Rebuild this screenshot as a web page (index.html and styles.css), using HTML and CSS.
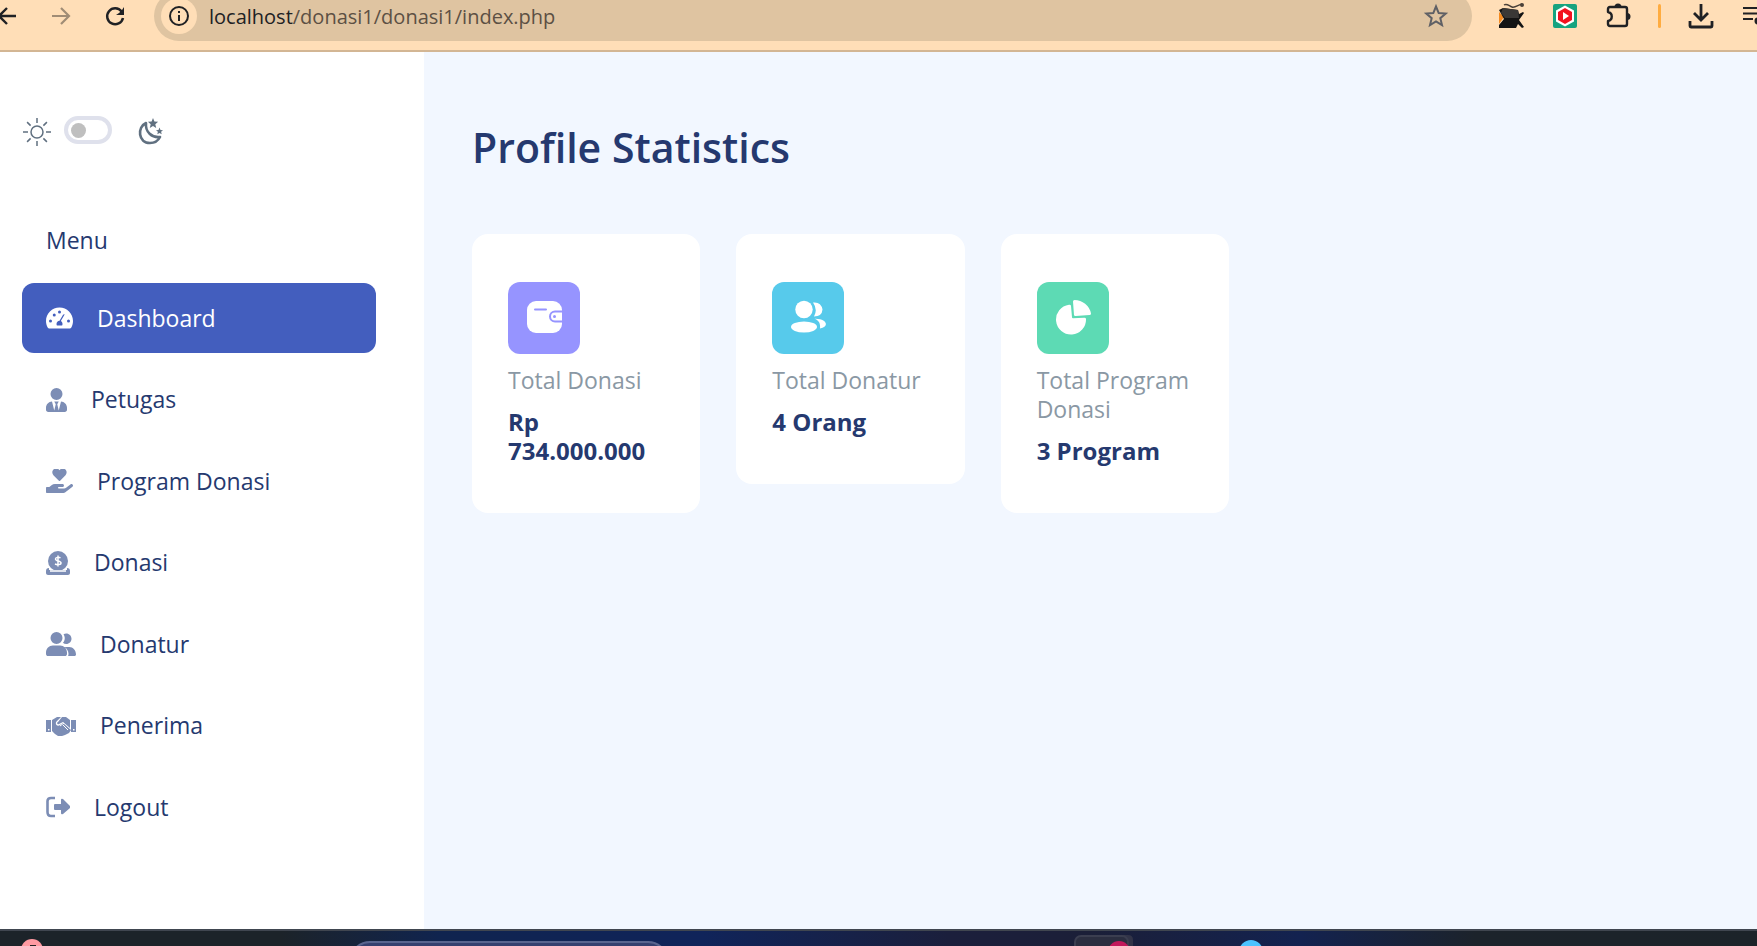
FILE: index.html
```html
<!DOCTYPE html>
<html lang="id">
<head>
<meta charset="utf-8">
<title>Dashboard Donasi</title>
<link rel="stylesheet" href="styles.css">
</head>
<body>
<header class="browser">
  <button class="tool tool-back" aria-label="Back"><svg width="24" height="24" viewBox="0 0 24 24"><path d="M21 12H4M12 4l-8 8 8 8" fill="none" stroke="#202124" stroke-width="2.4"/></svg></button>
  <button class="tool tool-forward" aria-label="Forward"><svg width="24" height="24" viewBox="0 0 24 24"><path d="M3 12h17M12 4l8 8-8 8" fill="none" stroke="#a08c75" stroke-width="2.2"/></svg></button>
  <button class="tool tool-reload" aria-label="Reload"><svg width="24" height="24" viewBox="0 0 24 24"><path d="M18.600 7.500A8 8 0 1 0 20 14" fill="none" stroke="#202124" stroke-width="2.500"/><path d="M21 3v8h-8l3-2 3-3z" fill="#202124"/></svg></button>
  <div class="address">
    <span class="site-info"><svg width="24" height="24" viewBox="0 0 24 24"><circle cx="12" cy="12" r="9" fill="none" stroke="#202124" stroke-width="2"/><path d="M12 11v6M12 7v2" stroke="#202124" stroke-width="2"/></svg></span>
    <p class="url"><span class="url-host">localhost</span>/donasi1/donasi1/index.php</p>
    <button class="tool tool-star" aria-label="Bookmark"><svg width="26" height="26" viewBox="0 0 26 26"><path d="M13 3.500l2.700 6.600 7 .5-5.400 4.600 1.700 6.900-6-3.700-6 3.700 1.700-6.900-5.400-4.600 7-.5z" fill="none" stroke="#5f6065" stroke-width="2"/></svg></button>
  </div>
  <div class="extensions">
    <svg width="26" height="26" viewBox="0 0 26 26"><path d="M1 9l5 5-5 7z" fill="#f58a1f"/><path d="M5 5l15 2 1 4 4-2 1 1-5 7 5 7-2 1-4-4-2 4H1v-3l5-6-5-9z" fill="#141414"/><path d="M5 5l15 2 1 8H7L3 10z" fill="#3a3836"/><path d="M6 2c3-2 5 1 8 2s6-2 10-3" fill="none" stroke="#4a4038" stroke-width="1.500"/><circle cx="24" cy="2" r="2" fill="#4a4038"/></svg>
    <svg width="26" height="26" viewBox="0 0 26 26"><rect x="1" y="1" width="24" height="24" rx="2" fill="#16a37f"/><path d="M13 2.500l9 5v11l-9 5-9-5v-11z" fill="#fff"/><path d="M13 5l7 4v8l-7 4-7-4V9z" fill="#f3101f"/><path d="M11 9l6 4-6 4z" fill="#fff"/></svg>
    <svg width="26" height="26" viewBox="0 0 26 26"><path d="M4 4h15q2 0 2 2v15q0 2-2 2H4q-2 0-2-2v-3c5-1 5-8 0-9V6q0-2 2-2z" fill="none" stroke="#202124" stroke-width="2.400" stroke-linejoin="round"/><path d="M8.500 4a3.500 3.500 0 0 1 7 0zM21 10a3.500 3.500 0 0 1 0 7z" fill="#202124"/></svg>
  </div>
  <span class="divider"></span>
  <button class="tool tool-download" aria-label="Downloads"><svg width="26" height="26" viewBox="0 0 26 26"><path d="M13 1v15M6 10l7 7 7-7M2 18v5q0 1 1 1h20q1 0 1-1v-5" fill="none" stroke="#202124" stroke-width="2.800"/></svg></button>
  <button class="tool tool-media" aria-label="Media"><svg width="26" height="26" viewBox="0 0 26 26"><path d="M1 5h15M1 10.500h15M1 16h10" stroke="#202124" stroke-width="2.200"/><circle cx="16" cy="18" r="3.500" fill="#202124"/><path d="M18.500 18V6h5" stroke="#202124" stroke-width="2.200" fill="none"/></svg></button>
</header>

<div class="app">
  <aside class="sidebar">
    <div class="theme">
      <svg class="muted" width="28" height="28" viewBox="0 0 28 28" fill="none" stroke="currentColor" stroke-width="1.500"><circle cx="14" cy="14" r="6"/><path d="M14 0v5M14 23v5M0 14h5M23 14h5M4.100 4.100l3.500 3.500M20.400 20.400l3.500 3.500M4.100 23.900l3.500-3.500M20.400 7.600l3.500-3.500"/></svg>
      <input class="switch" type="checkbox" role="switch" aria-label="Dark mode">
      <svg class="moon muted" width="26" height="28" viewBox="0 0 26 28"><path d="M8 5C-1 9 0 25 12 25c5 0 8-2 10-6-8 1-15-5-14-14z" fill="none" stroke="currentColor" stroke-width="2.600" stroke-linejoin="round"/><path d="M15 0l1.400 3.500 3.700.3-2.800 2.400.9 3.700-3.200-2-3.200 2 .9-3.700-2.800-2.400 3.700-.3zM21.500 9.500l1 2.500 2.500.2-1.900 1.600.6 2.500-2.200-1.400-2.200 1.400.6-2.500-1.900-1.600 2.500-.2z" fill="currentColor"/></svg>
    </div>
    <h2 class="menu-title">Menu</h2>
    <nav class="menu">
      <a class="item active" href="#"><svg width="27" height="24" viewBox="0 0 576 512"><path fill="currentColor" d="M288 32C129 32 0 161 0 320c0 53 14 102 39 144 6 10 17 16 28 16h442c11 0 22-6 28-16 25-42 39-91 39-144C576 161 447 32 288 32zm0 64a32 32 0 1 1 0 64 32 32 0 0 1 0-64zM96 352a32 32 0 1 1 0-64 32 32 0 0 1 0 64zm48-160a32 32 0 1 1 64 0 32 32 0 0 1-64 0zm247 2l-75 127c22 13 36 36 36 63 0 11-3 22-8 32H232c-5-10-8-21-8-32 0-37 29-66 65-67l75-128c16-25 44-14 27 5zm89 158a32 32 0 1 1 0-64 32 32 0 0 1 0 64z"/></svg>Dashboard</a>
      <a class="item" href="#"><svg width="21" height="24" viewBox="0 0 448 512"><path fill="currentColor" d="M224 256a128 128 0 1 0 0-256 128 128 0 0 0 0 256zm95.800 32.600L272 480l-32-136 32-56h-96l32 56-32 136-47.800-191.400C56.900 292 0 350.300 0 422.400V464c0 26.500 21.500 48 48 48h352c26.500 0 48-21.500 48-48v-41.600c0-72.100-56.900-130.400-128.200-133.800z"/></svg>Petugas</a>
      <a class="item" href="#"><svg width="27" height="24" viewBox="0 0 576 512"><path fill="currentColor" d="M275 250c7 8 19 8 26 0l115-119c34-35 32-92-6-124-33-28-82-23-112 8l-10 10-12-12c-30-30-79-34-112-6-38 32-40 89-6 124zM565 328c-12-11-31-10-44 0l-92 74c-11 9-25 14-40 14H272c-21 0-21-32 0-32h78c16 0 31-11 33-27 3-20-12-37-31-37H192c-27 0-53 9-74 26l-47 38H16c-9 0-16 7-16 16v96c0 9 7 16 16 16h357c14 0 28-5 40-14l151-121c16-13 16-36 1-49z"/></svg>Program Donasi</a>
      <a class="item" href="#"><svg width="24" height="24" viewBox="0 0 24 24"><circle cx="12" cy="10" r="10" fill="currentColor"/><path d="M3 17v2h18v-2c2 0 3 1 3 3v2c0 1-1 2-2 2H2c-1 0-2-1-2-2v-2c0-2 1-3 3-3z" fill="currentColor"/><path d="M14.500 7c-1.500-1-5-1-5 1 0 2.500 5.500 1.500 5.500 4 0 2-4 2-6 1M12 4.500v11" fill="none" stroke="#fff" stroke-width="1.500"/><path d="M4 20h16" stroke="#fff" stroke-width="1.500"/></svg>Donasi</a>
      <a class="item" href="#"><svg width="30" height="24" viewBox="0 0 640 512"><path fill="currentColor" d="M224 256a128 128 0 1 0 0-256 128 128 0 0 0 0 256zM301 288H147C66 288 0 354 0 435v32c0 25 20 45 45 45h358c25 0 45-20 45-45v-32c0-81-66-147-147-147zM432 256c62 0 112-50 112-112S494 32 432 32c-21 0-41 6-58 16 17 27 26 58 26 80 0 44-15 81-40 102 20 17 45 26 72 26zM497 320H393c51 35 87 86 87 144 0 18-3 34-9 48h137c18 0 32-14 32-32 0-88-64-160-143-160z"/></svg>Donatur</a>
      <a class="item" href="#"><svg width="30" height="24" viewBox="0 0 30 24"><path fill="currentColor" d="M0 6h5v12H0zM25 6h5v12h-5zM6 6l5-3h4l-5 5c-1 3 2 5 4 3l3-2 8 7-2 3-2 1-2 1-3 1h-4l-3-2-3-3zM16 3h4l4 3v8l-7-6-4 2c-1 1-3-1-1-2z"/><path d="M17 11l5 5M14 12l4-3" stroke="#fff" stroke-width="1" fill="none"/><path d="M2 15h1.500v1.500H2zM27 15h1.500v1.500H27z" fill="#fff"/></svg>Penerima</a>
      <a class="item" href="#"><svg width="24" height="24" viewBox="0 0 24 24"><path d="M9 3H5Q1.500 3 1.500 6v11q0 4 3.500 4h4" fill="none" stroke="currentColor" stroke-width="2.600"/><path d="M9 9h6V5q0-2 2-1l7 7q.8 1 0 2l-7 6q-2 1-2-1v-3H9q-1 0-1-1v-4q0-1 1-1z" fill="currentColor"/></svg>Logout</a>
    </nav>
  </aside>
  <main class="content">
    <h1 class="heading">Profile Statistics</h1>
    <section class="cards">
      <article class="card">
        <div class="badge purple"><svg width="36" height="36" viewBox="0 0 36 36"><rect x="1" y="1" width="35" height="32" rx="9" fill="#fff"/><path d="M9 9.500h11M36 11.500h-7a5 5 0 0 0 0 10h7" fill="none" stroke="#9694ff" stroke-width="2" stroke-linecap="round"/><circle cx="28.500" cy="16.500" r="1.500" fill="#9694ff"/></svg></div>
        <h2 class="label">Total Donasi</h2>
        <p class="value">Rp 734.000.000</p>
      </article>
      <article class="card">
        <div class="badge blue"><svg width="36" height="36" viewBox="0 0 36 36" fill="#fff"><circle cx="14" cy="9.500" r="8.700"/><ellipse cx="14" cy="27" rx="13" ry="5.500"/><path d="M23 2.500q8-1 9.500 7-.5 7-8.500 7 4-7-1-14zM24.500 18.700c13-.5 15 8.500 5.500 9.700.5-5-1-8-5.500-9.700z"/></svg></div>
        <h2 class="label">Total Donatur</h2>
        <p class="value">4 Orang</p>
      </article>
      <article class="card">
        <div class="badge green"><svg width="36" height="36" viewBox="0 0 36 36" fill="#fff"><path d="M16 6q0-1.500-2-1.300A15 15 0 1 0 31 19q0-1.500-2-1.300l-11 .6q-1 0-1-1zM18 1.500q0-1.500 1.500-1.500A17 17 0 0 1 36 13.500q0 1.500-1.500 1.500l-14 1q-1.500 0-1.500-1z"/></svg></div>
        <h2 class="label">Total Program Donasi</h2>
        <p class="value">3 Program</p>
      </article>
    </section>
  </main>
</div>

<footer class="taskbar">
  <svg class="taskbar-art" width="1757" height="17" viewBox="0 0 1757 17"><circle cx="32" cy="21" r="11" fill="#ff9aa2"/><path d="M30 16h6v1h-6z" fill="#222"/><rect x="350" y="13" width="318" height="40" rx="20" fill="#35406f" stroke="#59658f" stroke-width="2"/><path d="M1110 17V10q0-4 5-4h13q5 0 5 5v7z" fill="#323448"/><rect x="1075" y="7" width="53" height="40" rx="6" fill="#2b2e40" stroke="#3b3e50" stroke-width="2"/><circle cx="1119" cy="23" r="11" fill="#c2185b"/><circle cx="1251" cy="23" r="12" fill="#4cc2ff"/></svg>
</footer>
</body>
</html>
```
FILE: styles.css
```css
* { box-sizing: border-box; }
body {
  margin: 0;
  min-height: 100vh;
  display: flex;
  flex-direction: column;
  overflow: hidden;
  font-family: "Open Sans", "Noto Sans", sans-serif;
  font-size: 24px;
  line-height: 29px;
  color: #25396f;
  background: #f2f7ff;
}
h1, h2, p { margin: 0; }
svg { flex: none; display: block; }

.browser {
  display: flex;
  align-items: center;
  height: 52px;
  padding-bottom: 18px;
  background: #ffdeb7;
  border-bottom: 2px solid #d3b694;
  overflow: hidden;
}
.tool { flex: none; padding: 0; border: 0; background: none; }
.tool-back { margin-left: -5px; }
.tool-forward { margin-left: 30px; }
.tool-reload { margin-left: 30px; }
.address {
  flex: 1;
  display: flex;
  align-items: center;
  height: 50px;
  margin-left: 27px;
  padding: 0 23px 0 7px;
  border-radius: 25px;
  background: #dfc4a1;
}
.site-info { padding: 6px; border-radius: 50%; background: #ffdeb7; }
.url {
  flex: 1;
  padding-left: 12px;
  font-size: 20px;
  color: #5c5044;
}
.url-host { color: #202124; }
.extensions { display: flex; gap: 28px; margin-left: 26px; }
.divider { width: 3px; height: 24px; margin-left: 26px; border-radius: 2px; background: #ffac40; }
.tool-download { margin-left: 27px; }
.tool-media { margin: 0 -11px 0 28px; }

.app { flex: 1; display: flex; }
.sidebar {
  width: 424px;
  display: flex;
  flex-direction: column;
  padding: 64px 48px 87px 22px;
  background: #fff;
}
.theme { display: flex; align-items: center; padding-left: 1px; }
.muted { color: #607080; }
.switch {
  appearance: none;
  width: 48px;
  height: 28px;
  margin: 0 0 4px 13px;
  padding: 3px;
  border: 4px solid #dfe1ec;
  border-radius: 14px;
  background: #fff;
}
.switch::before {
  content: "";
  display: block;
  width: 15px;
  height: 15px;
  border-radius: 50%;
  background: #bfbfbf;
}
.moon { margin-left: 26px; }
.menu-title { margin: 78px 24px 28px; font-size: 23px; font-weight: 400; }
.menu { flex: 1; display: flex; flex-direction: column; justify-content: space-between; }
.item {
  display: flex;
  align-items: center;
  gap: 24px;
  height: 70px;
  padding: 0 24px;
  border-radius: 12px;
  font-size: 23px;
  font-weight: 500;
  color: #25396f;
  text-decoration: none;
}
.item svg { color: #7c8db5; }
.active { background: #435ebe; color: #fff; }
.active svg { color: #fff; }

.content { flex: 1; padding: 70px 48px; }
.heading { font-size: 41px; line-height: 50px; font-weight: 600; }
.cards {
  display: grid;
  grid-template-columns: repeat(3, 1fr);
  align-items: start;
  gap: 36px;
  max-width: 757px;
  margin-top: 62px;
}
.card { padding: 48px 36px; border-radius: 16px; background: #fff; }
.badge {
  display: flex;
  align-items: center;
  justify-content: center;
  width: 72px;
  height: 72px;
  margin-bottom: 12px;
  border-radius: 12px;
}
.purple { background: #9694ff; }
.blue { background: #57caeb; }
.green { background: #5ddab4; }
.label { margin-bottom: 12px; font-size: 23px; font-weight: 400; color: #8a98a4; }
.value { font-weight: 700; }

.taskbar {
  height: 17px;
  border-top: 2px solid #404650;
  overflow: hidden;
  background: linear-gradient(90deg, #1c2329 0%, #1c2329 16%, #10244f 25%, #10245a 40%, #1b1f3c 54%, #1b1f38 62%, #132250 74%, #1c232b 84%, #1c2329 100%);
}
.taskbar-art { margin-top: -2px; }
```
